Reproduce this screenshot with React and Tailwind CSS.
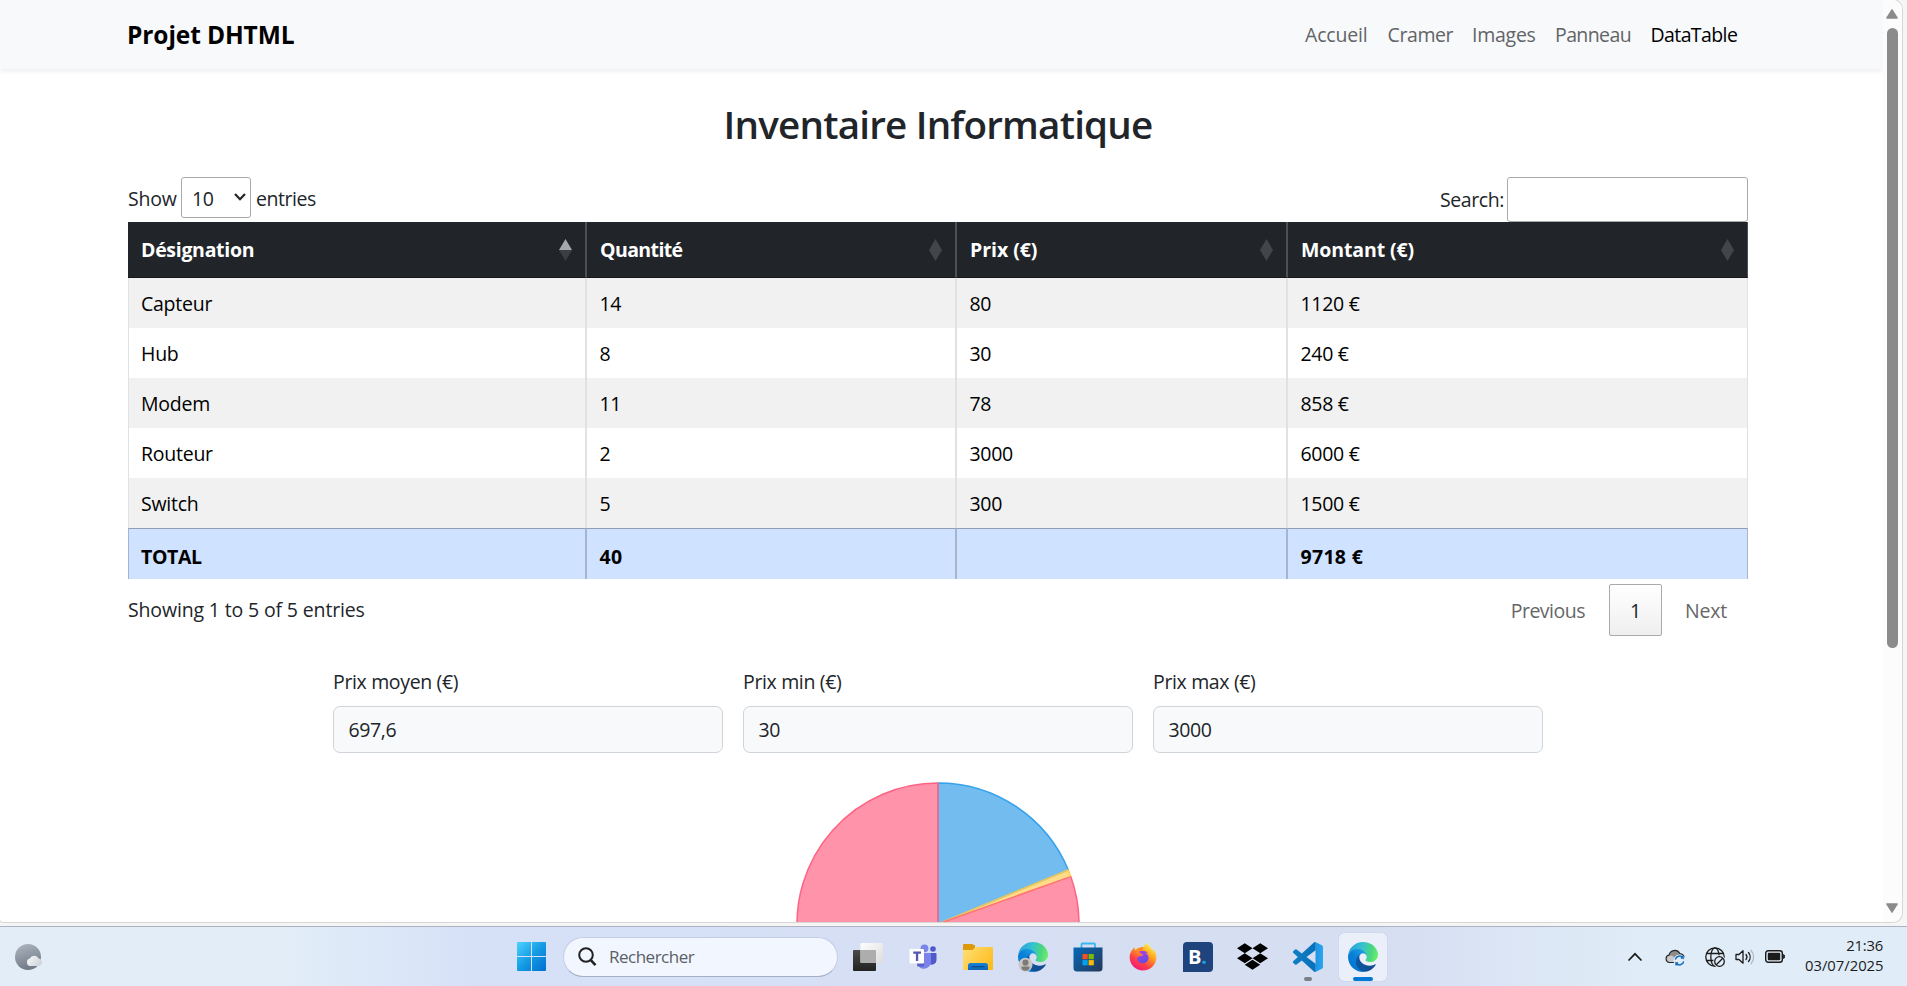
import { FaDropbox, FaFirefoxBrowser } from "react-icons/fa";

const navLinks = [
  { label: "Accueil", cls: "w-[62.5px] tracking-[-0.2px] text-[#626466]" },
  { label: "Cramer", cls: "w-[64.5px] tracking-[-0.4px] text-[#626466]" },
  { label: "Images", cls: "w-[63px] tracking-[-0.25px] text-[#626466]" },
  { label: "Panneau", cls: "w-[75.5px] tracking-[-0.6px] text-[#626466]" },
  { label: "DataTable", cls: "w-[86.5px] tracking-[-0.6px] text-black" },
];

const columns = [
  { label: "Désignation", cls: "tracking-[-0.3px]", sorted: true },
  { label: "Quantité", cls: "tracking-[-0.6px]" },
  { label: "Prix (€)", cls: "tracking-[-0.05px]" },
  { label: "Montant (€)", cls: "tracking-[-0.1px]" },
];

const rows = [
  ["Capteur", "14", "80", "1120 €"],
  ["Hub", "8", "30", "240 €"],
  ["Modem", "11", "78", "858 €"],
  ["Routeur", "2", "3000", "6000 €"],
  ["Switch", "5", "300", "1500 €"],
];

const stats = [
  ["Prix moyen (€)", "697,6"],
  ["Prix min (€)", "30"],
  ["Prix max (€)", "3000"],
];

function SortArrows({ sorted }) {
  return (
    <svg width="13" height="22" viewBox="0 0 13 22">
      <path d="M6.5 0 L13 11 H0 Z" fill={sorted ? "#a6a8a9" : "#434649"} />
      <path d="M6.5 22 L13 11 H0 Z" fill={sorted ? "#3c3f42" : "#434649"} />
    </svg>
  );
}

function Nav() {
  return (
    <header className="relative z-10 flex h-[69px] items-center justify-between bg-[#f8f9fb] pr-[146px] pl-[127px] shadow-[0_2px_5px_rgba(0,0,0,0.075)]">
      <span className="text-[24.5px] font-bold tracking-[-0.1px] text-black">Projet DHTML</span>
      <nav className="flex gap-5">
        {navLinks.map((l) => (
          <a key={l.label} className={"whitespace-nowrap " + l.cls}>{l.label}</a>
        ))}
      </nav>
    </header>
  );
}

function Inventory() {
  return (
    <section className="mx-[128px] w-[1620px]">
      <div className="flex h-[45px] items-start justify-between">
        <div className="flex items-center">
          <span className="w-[53px] pt-[2px] tracking-[-0.2px]">Show</span>
          <div className="flex h-[41px] w-[70px] items-center justify-between rounded-[3px] border border-[#aaa] pr-[4px] pl-[10px]">
            <span className="pt-[2px] tracking-[-0.35px]">10</span>
            <svg width="12" height="8" viewBox="0 0 12 8" className="mb-px">
              <path d="M1 1 L6 6.2 L11 1" fill="none" stroke="#212529" strokeWidth="2.2" />
            </svg>
          </div>
          <span className="ml-[5px] pt-[2px] tracking-[-0.45px]">entries</span>
        </div>
        <div className="flex items-center">
          <span className="mr-[3px] tracking-[-0.4px]">Search:</span>
          <div className="h-[45px] w-[241px] rounded-[3px] border border-[#aaa] bg-white" />
        </div>
      </div>

      <table className="w-[1620px] table-fixed border-separate border-spacing-0 text-black">
        <colgroup>
          <col className="w-[459px]" />
          <col className="w-[370px]" />
          <col className="w-[331px]" />
          <col className="w-[460px]" />
        </colgroup>
        <thead>
          <tr className="h-[56px] bg-[#212529] text-left text-white">
            {columns.map((c) => (
              <th key={c.label} className="border-r-2 border-b border-r-[#4d5154] border-b-[#16181b] p-0 pr-[13px] pl-[13px] font-bold last:border-r">
                <div className="flex items-center justify-between">
                  <span className={c.cls}>{c.label}</span>
                  <SortArrows sorted={c.sorted} />
                </div>
              </th>
            ))}
          </tr>
        </thead>
        <tbody>
          {rows.map((r) => (
            <tr key={r[0]} className="h-[50px] odd:bg-[#f1f1f1]">
              {r.map((v, i) => (
                <td key={i} className="border-r-2 border-[#dee2e6] p-0 pt-[2px] pl-[12.5px] tracking-[-0.3px] first:border-l first:pl-[12px] first:tracking-[-0.25px] last:border-r">
                  {v}
                </td>
              ))}
            </tr>
          ))}
        </tbody>
        <tfoot>
          <tr className="h-[51px] bg-[#cfe2ff] font-bold">
            {["TOTAL", "40", "", "9718 €"].map((v, i) => (
              <td key={i} className="border-t border-r-2 border-t-[#919eb6] border-r-[#a6b5cc] border-l-[#a6b5cc] p-0 pt-[5px] pl-[12.5px] tracking-[0.3px] first:border-l first:pl-[12px] first:tracking-[-0.4px] last:border-r">
                {v}
              </td>
            ))}
          </tr>
        </tfoot>
      </table>

      <div className="mt-[5px] flex h-[52px] items-center justify-between">
        <span className="tracking-[-0.15px]">Showing 1 to 5 of 5 entries</span>
        <div className="flex items-center pr-[21px] text-[#666]">
          <span className="pt-[2px] tracking-[-0.5px]">Previous</span>
          <span className="ml-[24px] flex h-[52px] w-[53px] items-center justify-center rounded-[2px] border border-[#aaa] bg-linear-to-b from-white to-[#efefef] pt-[2px] text-[#212529]">
            1
          </span>
          <span className="ml-[23px] pt-[2px] tracking-[-0.2px]">Next</span>
        </div>
      </div>
    </section>
  );
}

function Stats() {
  return (
    <section className="mt-[30px] ml-[333px] flex gap-5">
      {stats.map(([label, value]) => (
        <div key={label} className="w-[390px]">
          <div className="h-[40px] leading-[31px] tracking-[-0.35px]">{label}</div>
          <div className="flex h-[47px] items-center rounded-[7px] border border-[#ced4da] bg-[#f8f9fb] pl-[14.5px] tracking-[-0.4px]">{value}</div>
        </div>
      ))}
    </section>
  );
}

function PieChart() {
  return (
    <svg className="mt-[29px] ml-[796px] block" width="284" height="284" viewBox="-142 -142 284 284">
      <g strokeWidth="1.5" strokeLinejoin="bevel">
        <path d="M0 0 L132.8 -47.4 A141 141 0 1 1 0 -141 Z" fill="#ff93a9" stroke="#ff6384" />
        <path d="M0 0 L0 -141 A141 141 0 0 1 130.3 -54 Z" fill="#72bcf0" stroke="#36a2eb" />
        <path d="M0 0 L130.3 -54 A141 141 0 0 1 132.8 -47.4 Z" fill="#ffdd88" stroke="#ffcd56" />
        <path d="M0 0 V-141" stroke="#d4749c" strokeWidth="2" />
        <path d="M0 0 L130.3 -54" stroke="#e0c66c" />
        <path d="M0 0 L132.8 -47.4" stroke="#ff6f80" />
      </g>
    </svg>
  );
}

function Scrollbar() {
  return (
    <div className="flex w-[19px] flex-col items-center rounded-br-[9px] bg-[#fcfcfc] pt-[9px] pr-px pb-[9px]">
      <svg width="12" height="10" viewBox="0 0 12 10">
        <path d="M6 .8 L11.2 9 H.8 Z" fill="#8b8b8b" stroke="#8b8b8b" strokeWidth="1.4" strokeLinejoin="round" />
      </svg>
      <div className="mt-[9px] h-[620px] w-[11px] rounded-full bg-[#8b8b8b]" />
      <svg className="mt-auto" width="12" height="10" viewBox="0 0 12 10">
        <path d="M6 9.2 L11.2 1 H.8 Z" fill="#8b8b8b" stroke="#8b8b8b" strokeWidth="1.4" strokeLinejoin="round" />
      </svg>
    </div>
  );
}

function EdgeIcon({ id, person }) {
  return (
    <svg width="30" height="30" viewBox="0 0 256 256" className="overflow-visible">
      <defs>
        <linearGradient id={id + "a"} x1="60" y1="180" x2="236" y2="180" gradientUnits="userSpaceOnUse">
          <stop stopColor="#0c59a4" />
          <stop offset="1" stopColor="#114a8b" />
        </linearGradient>
        <linearGradient id={id + "b"} x1="150" y1="95" x2="40" y2="220" gradientUnits="userSpaceOnUse">
          <stop stopColor="#1b9de2" />
          <stop offset=".5" stopColor="#0a7fd6" />
          <stop offset="1" stopColor="#0078d4" />
        </linearGradient>
        <linearGradient id={id + "c"} x1="10" y1="60" x2="250" y2="110" gradientUnits="userSpaceOnUse">
          <stop stopColor="#2b9fe0" />
          <stop offset=".45" stopColor="#35c1d0" />
          <stop offset=".8" stopColor="#4bd77f" />
          <stop offset="1" stopColor="#66eb6e" />
        </linearGradient>
      </defs>
      <g transform="translate(-4.63 -4.92)">
        <path fill={"url(#" + id + "a)"} d="M235.68 195.46a93.73 93.73 0 0 1-10.54 4.71 101.87 101.87 0 0 1-35.9 6.46c-47.32 0-88.54-32.55-88.54-74.32A31.48 31.48 0 0 1 117.13 105c-42.8 1.8-53.8 46.4-53.8 72.53 0 73.88 68.09 81.37 82.76 81.37 7.91 0 19.84-2.3 27-4.56l1.31-.44a128.34 128.34 0 0 0 66.6-52.8 4 4 0 0 0-5.32-5.64z" />
        <path fill={"url(#" + id + "b)"} d="M110.34 246.34A79.2 79.2 0 0 1 87.6 225a80.72 80.72 0 0 1 29.53-120c3.12-1.47 8.45-4.05 15.54-4a32.35 32.35 0 0 1 25.69 13 31.88 31.88 0 0 1 6.36 18.66c0-.21 24.46-79.6-80-79.6-43.9 0-80 41.66-80 78.21a130.15 130.15 0 0 0 12.11 56 128 128 0 0 0 156.38 67.11 75.55 75.55 0 0 1-62.78-8z" />
        <path fill={"url(#" + id + "c)"} d="M156.94 153.78c-.81 1.05-3.3 2.5-3.3 5.66 0 2.61 1.7 5.12 4.72 7.23 14.38 10 41.49 8.68 41.56 8.68a59.56 59.56 0 0 0 30.27-8.35 61.38 61.38 0 0 0 30.43-52.88c.26-22.41-8-37.31-11.34-43.91-21.19-41.45-66.93-65.29-116.67-65.29a128 128 0 0 0-128 126.2c.48-36.54 36.8-66.05 80-66.05 3.5 0 23.46.34 42 10.07 16.34 8.58 24.9 18.94 30.85 29.21 6.18 10.67 7.28 24.15 7.28 29.52s-2.74 13.33-7.8 19.91z" />
      </g>
      {person && (
        <g>
          <circle cx="64" cy="194" r="60" fill="#c9c7c5" />
          <circle cx="64" cy="176" r="26" fill="#7d7a78" />
          <path d="M30 208 H98 V216 A34 30 0 0 1 30 216 Z" fill="#7d7a78" />
        </g>
      )}
    </svg>
  );
}

function WindowsLogo() {
  return (
    <svg width="29" height="29" viewBox="0 0 29 29">
      <defs>
        <linearGradient id="win" x1="0" y1="0" x2="29" y2="29" gradientUnits="userSpaceOnUse">
          <stop stopColor="#4bd3ff" />
          <stop offset=".5" stopColor="#159be4" />
          <stop offset="1" stopColor="#0070d0" />
        </linearGradient>
      </defs>
      <path fill="url(#win)" d="M1 0H14V14H0V1Q0 0 1 0ZM15 0H28Q29 0 29 1V14H15ZM0 15H14V29H1Q0 29 0 28ZM15 15H29V28Q29 29 28 29H15Z" />
    </svg>
  );
}

function TaskView() {
  return (
    <svg width="30" height="30" viewBox="0 0 30 30">
      <defs>
        <linearGradient id="tvd" x1="0" y1="8" x2="0" y2="29" gradientUnits="userSpaceOnUse">
          <stop stopColor="#4a4a4a" />
          <stop offset="1" stopColor="#222" />
        </linearGradient>
        <linearGradient id="tvl" x1="8" y1="0" x2="30" y2="21" gradientUnits="userSpaceOnUse">
          <stop stopColor="#fff" />
          <stop offset="1" stopColor="#dcdcdc" />
        </linearGradient>
      </defs>
      <rect x="0" y="8" width="23" height="21" rx="1" fill="url(#tvd)" />
      <rect x="7.5" y="1" width="22.5" height="20" rx="1" fill="url(#tvl)" />
      <path d="M7.5 8H22a1 1 0 0 1 1 1V21H8.5a1 1 0 0 1-1-1Z" fill="#adadad" />
    </svg>
  );
}

function Teams() {
  return (
    <svg width="30" height="30" viewBox="0 0 30 30">
      <circle cx="16.5" cy="6.3" r="3.9" fill="#7b83eb" />
      <circle cx="25" cy="7" r="2.8" fill="#5059c9" />
      <path d="M21 11H27.5a1 1 0 0 1 1 1v6a5 5 0 0 1-7.5 4Z" fill="#5059c9" />
      <path d="M9 11H22a1 1 0 0 1 1 1v7.5a7 7 0 0 1-14 .5Z" fill="#7b83eb" />
      <path d="M16 11v13.5H9.5A7 7 0 0 1 9 20V11Z" fill="#5a62c3" />
      <rect x="1.5" y="7" width="14.5" height="14.5" rx="1" fill="#fff" />
      <path d="M5.2 9.6H13V11.7H10.2V19H7.9V11.7H5.2Z" fill="#5558af" />
    </svg>
  );
}

function Explorer() {
  return (
    <svg width="30" height="30" viewBox="0 0 30 30">
      <defs>
        <linearGradient id="fold" x1="0" y1="4" x2="30" y2="28" gradientUnits="userSpaceOnUse">
          <stop stopColor="#ffe07a" />
          <stop offset="1" stopColor="#fdb813" />
        </linearGradient>
        <linearGradient id="foldb" x1="0" y1="21" x2="0" y2="28" gradientUnits="userSpaceOnUse">
          <stop stopColor="#1683d8" />
          <stop offset="1" stopColor="#0f66b8" />
        </linearGradient>
      </defs>
      <path d="M0 3a1 1 0 0 1 1-1H9.5L12.5 5H0Z M0 3H12V9H0Z" fill="#dc9a0b" />
      <path d="M0 8H9.5L12.5 5H29a1 1 0 0 1 1 1V27a1 1 0 0 1-1 1H1a1 1 0 0 1-1-1Z" fill="url(#fold)" />
      <path d="M5 28V23.5a2.5 2.5 0 0 1 2.5-2.5H22.5a2.5 2.5 0 0 1 2.5 2.5V28Z" fill="url(#foldb)" />
      <path d="M8.5 24.7H21.5" stroke="#0a4a86" strokeWidth="1.2" />
    </svg>
  );
}

function Store() {
  return (
    <svg width="30" height="30" viewBox="0 0 30 30">
      <defs>
        <linearGradient id="store" x1="2" y1="5" x2="26" y2="30" gradientUnits="userSpaceOnUse">
          <stop stopColor="#0669b7" />
          <stop offset="1" stopColor="#243a5e" />
        </linearGradient>
      </defs>
      <path d="M8.5 7V2.5a1 1 0 0 1 1-1H21a1 1 0 0 1 1 1V7" fill="none" stroke="#35b8f1" strokeWidth="1.8" />
      <path d="M.5 5.5H29.5V26a3.5 3.5 0 0 1-3.5 3.5H4A3.5 3.5 0 0 1 .5 26Z" fill="url(#store)" />
      <path d="M9.5 12H14.7V17.2H9.5Z" fill="#f25022" />
      <path d="M15.6 12H20.8V17.2H15.6Z" fill="#7fba00" />
      <path d="M9.5 18.1H14.7V23.3H9.5Z" fill="#00a4ef" />
      <path d="M15.6 18.1H20.8V23.3H15.6Z" fill="#ffb900" />
    </svg>
  );
}

function Firefox() {
  return (
    <div className="relative flex size-[30px] items-center justify-center">
      <svg className="absolute inset-0" width="30" height="30" viewBox="0 0 30 30">
        <defs>
          <linearGradient id="ffx" x1="400" y1="40" x2="120" y2="480" gradientUnits="userSpaceOnUse">
            <stop stopColor="#fff04a" />
            <stop offset=".35" stopColor="#ffa01e" />
            <stop offset=".7" stopColor="#ff4046" />
            <stop offset="1" stopColor="#f0177f" />
          </linearGradient>
          <linearGradient id="ffp" x1="12" y1="8" x2="16" y2="22" gradientUnits="userSpaceOnUse">
            <stop stopColor="#b33ee6" />
            <stop offset="1" stopColor="#5b4ce0" />
          </linearGradient>
        </defs>
        <circle cx="15" cy="16" r="11" fill="#ff8a22" />
        <circle cx="14.5" cy="15.5" r="6.8" fill="url(#ffp)" />
      </svg>
      <FaFirefoxBrowser className="relative" size={28} fill="url(#ffx)" />
    </div>
  );
}

function VsCode() {
  return (
    <svg width="30" height="30" viewBox="0 0 24 24">
      <defs>
        <linearGradient id="vsc" x1="0" y1="0" x2="24" y2="0" gradientUnits="userSpaceOnUse">
          <stop stopColor="#0f7fc6" />
          <stop offset=".74" stopColor="#0a70b8" />
          <stop offset=".75" stopColor="#1f93e0" />
          <stop offset="1" stopColor="#2ba6f2" />
        </linearGradient>
      </defs>
      <path fill="url(#vsc)" d="M23.15 2.587L18.21.21a1.494 1.494 0 0 0-1.705.29l-9.46 8.63-4.12-3.128a.999.999 0 0 0-1.276.057L.327 7.261A1 1 0 0 0 .326 8.74L3.899 12 .326 15.26a1 1 0 0 0 .001 1.479L1.65 17.94a.999.999 0 0 0 1.276.057l4.12-3.128 9.46 8.63a1.492 1.492 0 0 0 1.704.29l4.942-2.377A1.5 1.5 0 0 0 24 20.06V3.939a1.5 1.5 0 0 0-.85-1.352zm-5.146 14.861L10.826 12l7.178-5.448v10.896z" />
    </svg>
  );
}

function Slot({ children, active, indicator }) {
  return (
    <div className="flex w-[55px] items-center justify-center">
      <div className={"relative flex h-[48px] w-[48px] items-center justify-center rounded-[5px] " + (active ? "bg-[#ebeff9] shadow-[0_0_1px_rgba(90,100,130,0.35)]" : "")}>
        {children}
        {indicator && <span className={"absolute bottom-0 h-[4px] rounded-full " + indicator} />}
      </div>
    </div>
  );
}

function Tray() {
  return (
    <div className="ml-auto flex items-center pr-[24px] text-[#1b1b1b]">
      <svg width="14" height="9" viewBox="0 0 14 9">
        <path d="M1 8 L7 1.8 L13 8" fill="none" stroke="#1b1b1b" strokeWidth="1.7" strokeLinecap="round" />
      </svg>
      <svg className="ml-[23px]" width="20" height="18" viewBox="0 0 20 18">
        <path d="M4.5 14.5A3.7 3.7 0 0 1 4 7.2 5.8 5.8 0 0 1 14.8 5.5 4.5 4.5 0 0 1 19.2 10.2 4.3 4.3 0 0 1 15 14.5Z" fill="#8d8d8d" stroke="#262626" strokeWidth="1.2" />
        <path d="M3.5 13.5A3 3 0 0 1 4.5 7.8Q7 7 9.5 9.5L11 14H4.5Z" fill="#c9c9c9" />
        <circle cx="14.5" cy="12.5" r="6" fill="#e1ecf8" />
        <path d="M10.3 11.5A4.4 4.4 0 0 1 18 9.7V7.5M18 10H15.8M18.7 13.5A4.4 4.4 0 0 1 11 15.3V17.5M11 15H13.2" fill="none" stroke="#0f6cbd" strokeWidth="1.4" />
      </svg>
      <svg className="ml-[20px]" width="20" height="20" viewBox="0 0 20 20" fill="none" stroke="#1b1b1b" strokeWidth="1.3">
        <circle cx="10" cy="10" r="9.2" />
        <ellipse cx="10" cy="10" rx="4.2" ry="9.2" />
        <path d="M1.5 6.5H18.5M1.5 13.5H18.5" />
        <circle cx="14.5" cy="14.5" r="6.3" fill="#e1ecf8" stroke="none" />
        <circle cx="14.5" cy="14.5" r="4.8" />
        <path d="M11.3 17.8 L17.8 11.3" />
      </svg>
      <svg className="ml-[10px]" width="20" height="18" viewBox="0 0 20 18" fill="none" stroke="#1b1b1b" strokeWidth="1.3" strokeLinecap="round" strokeLinejoin="round">
        <path d="M1 6.5H4L8 2.8V15.2L4 11.5H1Z" />
        <path d="M11 6.5A4 4 0 0 1 11 11.5M13.5 4.5A7 7 0 0 1 13.5 13.5" />
        <path d="M16 2.3A10 10 0 0 1 16 15.7" stroke="#b3bcc6" />
      </svg>
      <svg className="ml-[10px]" width="20" height="13" viewBox="0 0 20 13">
        <rect x=".7" y=".7" width="16.6" height="11.6" rx="2.5" fill="none" stroke="#1b1b1b" strokeWidth="1.4" />
        <rect x="2.8" y="2.8" width="12.4" height="7.4" rx="1" fill="#1b1b1b" />
        <path d="M18.3 4.5Q19.7 4.5 19.7 6.5T18.3 8.5Z" fill="#1b1b1b" stroke="#1b1b1b" strokeWidth=".8" />
      </svg>
      <div className="mb-[3px] ml-[20px] w-[78px] text-right text-[14.8px] leading-[20px]">
        <div className="tracking-[-0.2px]">21:36</div>
        <div>03/07/2025</div>
      </div>
    </div>
  );
}

function Taskbar() {
  return (
    <footer className="flex h-[60px] items-stretch border-t border-[#acb2bf] bg-linear-to-r from-[#e2edf8] from-15% via-[#d6e1f8] via-25% to-[#d6def2] to-60%">
      <div className="flex flex-1 items-stretch bg-linear-to-r from-transparent from-72% to-[#e0ecf7] to-86%">
        <div className="flex w-[517px] items-center pl-[15px]">
          <svg width="28" height="26" viewBox="0 0 28 26">
            <defs>
              <linearGradient id="moon" x1="8" y1="0" x2="16" y2="26" gradientUnits="userSpaceOnUse">
                <stop stopColor="#a9b3bd" />
                <stop offset="1" stopColor="#6e7683" />
              </linearGradient>
              <linearGradient id="cloud" x1="14" y1="11" x2="27" y2="22" gradientUnits="userSpaceOnUse">
                <stop stopColor="#f7f8f9" />
                <stop offset="1" stopColor="#c9ced4" />
              </linearGradient>
            </defs>
            <circle cx="13" cy="13" r="13" fill="url(#moon)" />
            <path d="M15 22A3.8 3.8 0 0 1 14.8 14.6 5 5 0 0 1 23.8 14.4 3.9 3.9 0 0 1 24 22Z" fill="url(#cloud)" />
          </svg>
        </div>
        <div className="flex items-center">
          <WindowsLogo />
          <div className="ml-[17px] flex h-[40px] w-[275px] items-center rounded-full border border-[#c3cde3] border-b-[#a3afc6] bg-[#f2f6fe] pl-[14px]">
            <svg width="19" height="20" viewBox="0 0 19 20" fill="none" stroke="#222" strokeWidth="2">
              <circle cx="8" cy="8" r="6.8" />
              <path d="M12.8 13.2 L17.5 18.2" strokeWidth="2.6" />
            </svg>
            <span className="ml-[12px] text-[17px] tracking-[-0.5px] text-[#5b5f66]">Rechercher</span>
          </div>
          <div className="ml-[2px] flex">
            <Slot><TaskView /></Slot>
            <Slot><Teams /></Slot>
            <Slot><Explorer /></Slot>
            <Slot><EdgeIcon id="ep" person /></Slot>
            <Slot><Store /></Slot>
            <Slot><Firefox /></Slot>
            <Slot>
              <div className="flex size-[30px] items-center justify-center rounded-[4px] rounded-bl-none bg-[#1f437c] text-[20px] leading-none font-bold text-white">
                B<span className="text-[#12a5e8]">.</span>
              </div>
            </Slot>
            <Slot><FaDropbox size={31} color="#000" /></Slot>
            <Slot indicator="w-[8px] bg-[#7b7f88]"><VsCode /></Slot>
            <Slot active indicator="w-[20px] bg-[#0078d4]"><EdgeIcon id="ea" /></Slot>
          </div>
        </div>
        <Tray />
      </div>
    </footer>
  );
}

export default function App() {
  return (
    <div className="flex h-[986px] w-[1907px] flex-col overflow-hidden bg-[#f5f5f5] font-['Open_Sans','Noto_Sans',sans-serif] text-[19.5px] leading-[30px] text-[#212529]">
      <div className="flex h-[926px] pr-[5px] pb-[4px]">
        <div className="flex w-[1902px] overflow-hidden rounded-tr-[9px] rounded-br-[9px] rounded-bl-[3px] bg-white shadow-[0_0_0_1px_#d9d6d6]">
          <main className="w-[1883px] overflow-hidden">
            <Nav />
            <h1 className="mt-[31px] mb-[29px] w-[1876px] text-center text-[38.6px] leading-[48px] font-[550] tracking-[-0.8px]">Inventaire Informatique</h1>
            <Inventory />
            <Stats />
            <PieChart />
          </main>
          <Scrollbar />
        </div>
      </div>
      <Taskbar />
    </div>
  );
}
